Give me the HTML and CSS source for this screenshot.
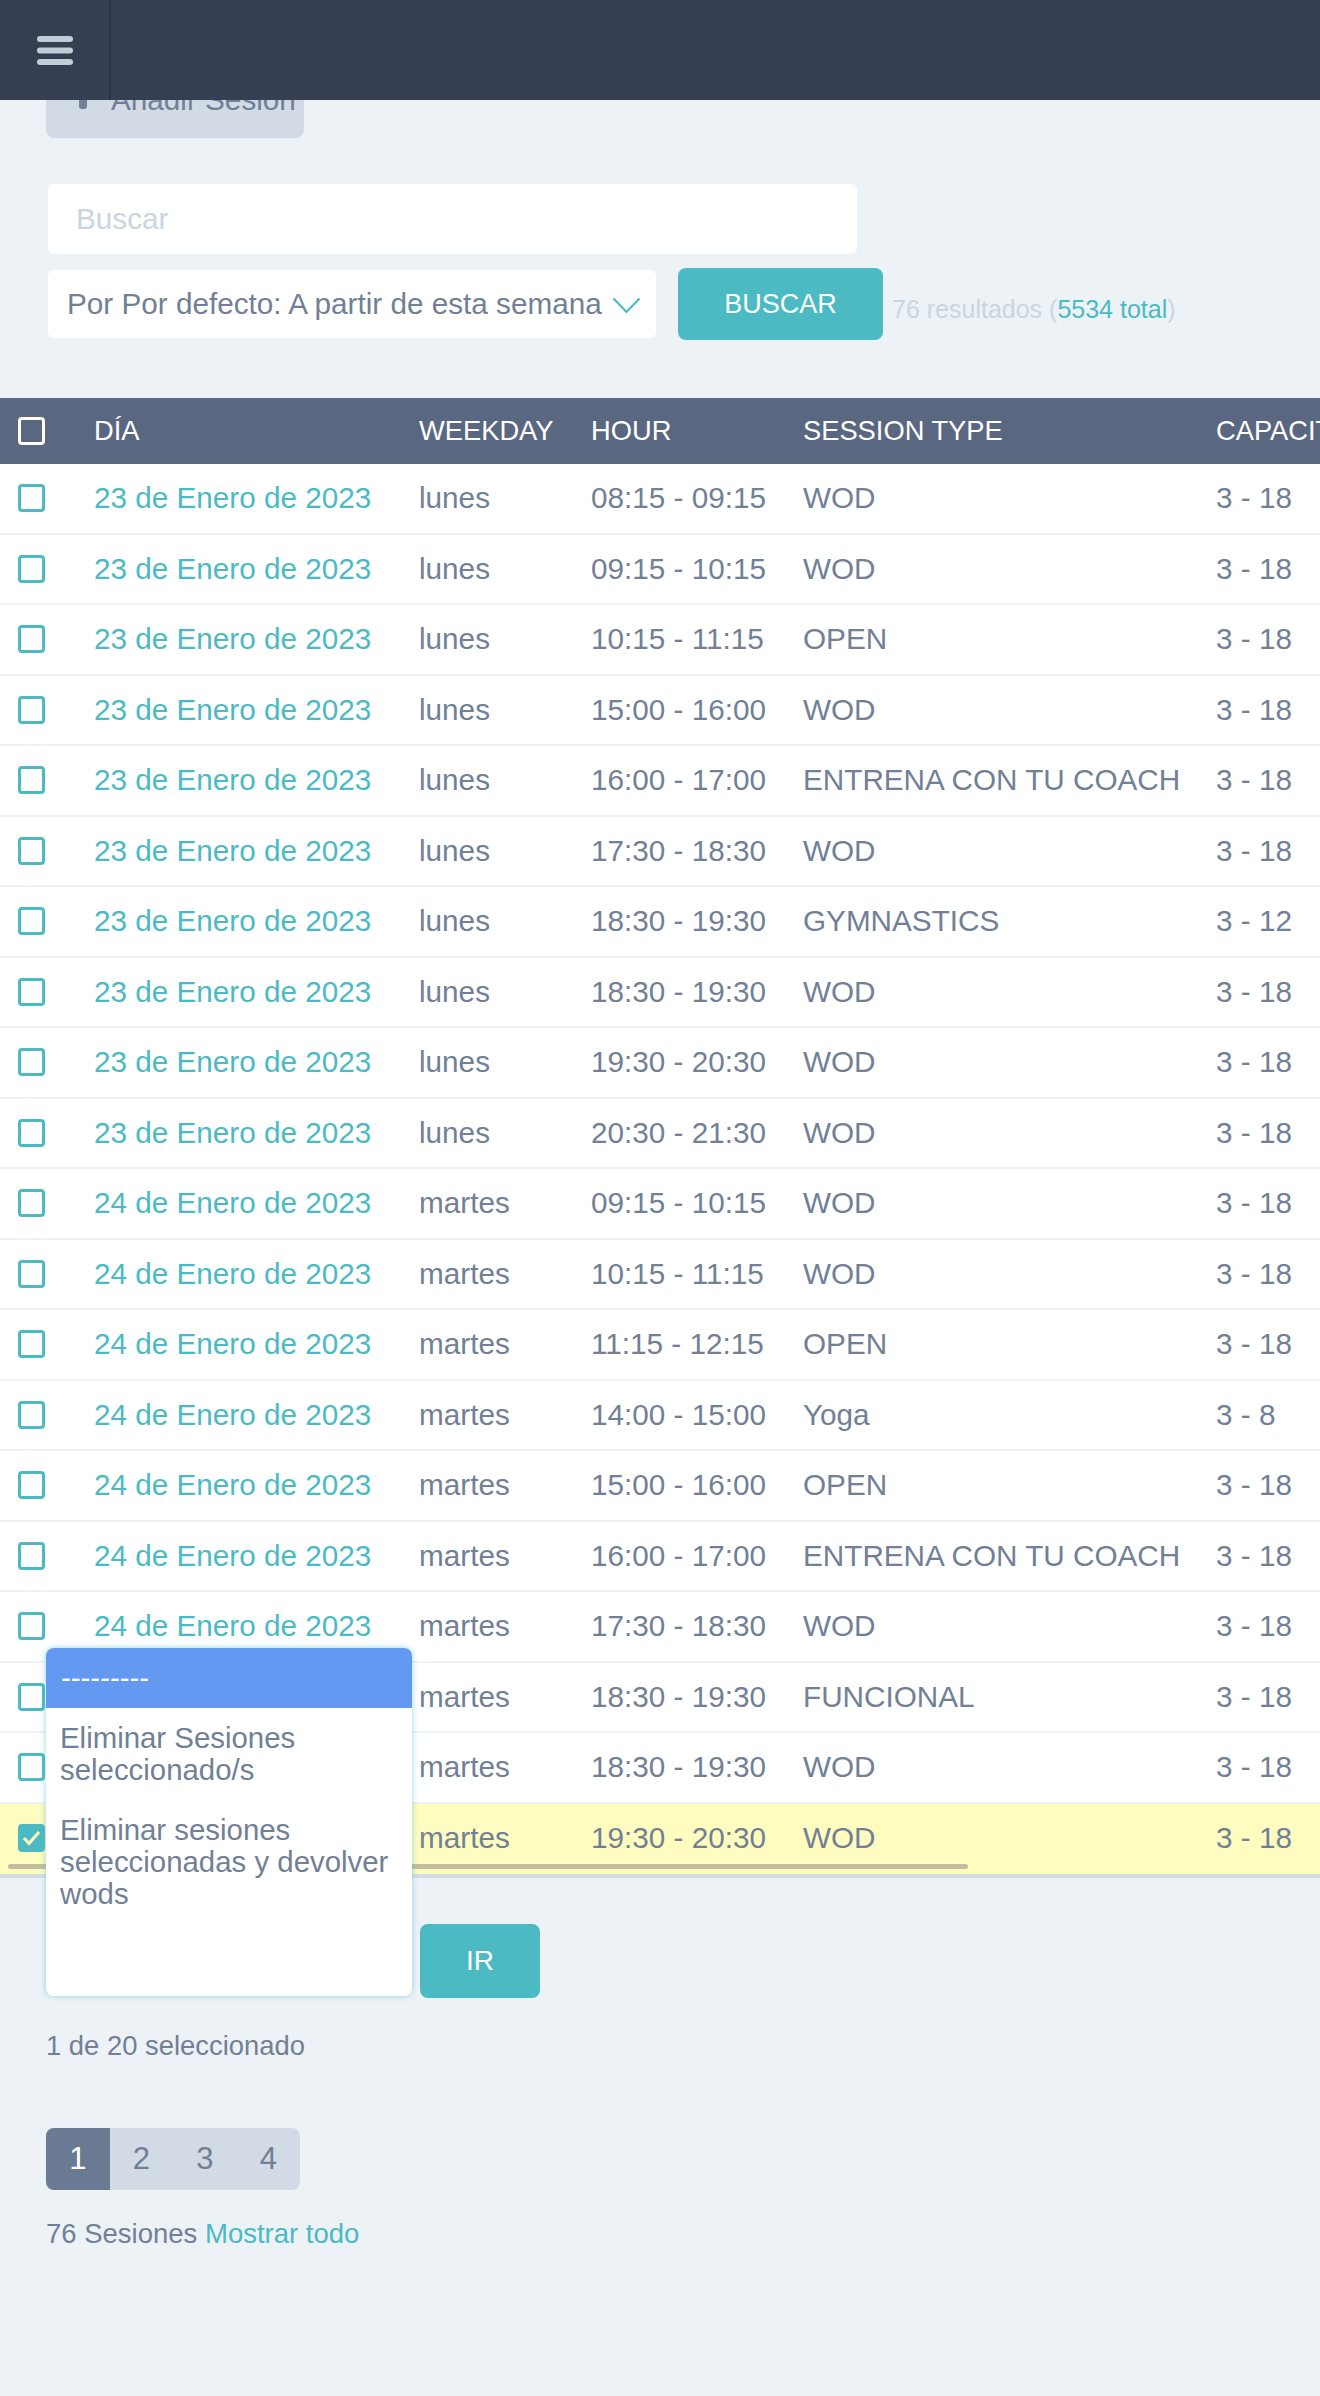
FILE: index.html
```html
<!DOCTYPE html>
<html lang="es">
<head>
<meta charset="utf-8">
<title>Sesiones</title>
<link rel="stylesheet" href="styles.css">
</head>
<body>
<header class="topbar">
  <div class="menu-btn">
    <svg width="36" height="30" viewBox="0 0 36 30"><rect x="0" y="0" width="36" height="6" rx="3" fill="#c4ccd8"/><rect x="0" y="11.5" width="36" height="6" rx="3" fill="#c4ccd8"/><rect x="0" y="23" width="36" height="6" rx="3" fill="#c4ccd8"/></svg>
  </div>
</header>

<main class="page">
  <div class="toolbar">
    <button class="btn-add" type="button">
      <svg class="plus" width="28" height="28" viewBox="0 0 28 28"><rect x="10" y="0" width="8" height="28" rx="3" fill="#718096"/><rect x="0" y="10" width="28" height="8" rx="3" fill="#718096"/></svg>
      <span>Añadir Sesión</span>
    </button>
  </div>

  <div class="filters">
    <input class="search" type="text" placeholder="Buscar">
    <div class="filter-row">
      <div class="select">
        <span>Por Por defecto: A partir de esta semana</span>
        <svg class="chev" width="29" height="17" viewBox="0 0 29 17"><polyline points="1.5,1.5 14.5,15 27.5,1.5" fill="none" stroke="#4bbac3" stroke-width="2.2"/></svg>
      </div>
      <button class="btn-search" type="button">BUSCAR</button>
      <span class="results">76 resultados (<a class="link">5534 total</a>)</span>
    </div>
  </div>

  <div class="table-wrap">
    <table class="sessions">
      <colgroup>
        <col class="c0"><col class="c1"><col class="c2"><col class="c3"><col class="c4"><col class="c5">
      </colgroup>
      <thead>
        <tr><th><span class="cb cb-head"></span></th><th>DÍA</th><th>WEEKDAY</th><th>HOUR</th><th>SESSION TYPE</th><th>CAPACITY</th></tr>
      </thead>
      <tbody>
        <tr><td><span class="cb"></span></td><td><a class="link">23 de Enero de 2023</a></td><td>lunes</td><td>08:15 - 09:15</td><td>WOD</td><td>3 - 18</td></tr>
        <tr><td><span class="cb"></span></td><td><a class="link">23 de Enero de 2023</a></td><td>lunes</td><td>09:15 - 10:15</td><td>WOD</td><td>3 - 18</td></tr>
        <tr><td><span class="cb"></span></td><td><a class="link">23 de Enero de 2023</a></td><td>lunes</td><td>10:15 - 11:15</td><td>OPEN</td><td>3 - 18</td></tr>
        <tr><td><span class="cb"></span></td><td><a class="link">23 de Enero de 2023</a></td><td>lunes</td><td>15:00 - 16:00</td><td>WOD</td><td>3 - 18</td></tr>
        <tr><td><span class="cb"></span></td><td><a class="link">23 de Enero de 2023</a></td><td>lunes</td><td>16:00 - 17:00</td><td>ENTRENA CON TU COACH</td><td>3 - 18</td></tr>
        <tr><td><span class="cb"></span></td><td><a class="link">23 de Enero de 2023</a></td><td>lunes</td><td>17:30 - 18:30</td><td>WOD</td><td>3 - 18</td></tr>
        <tr><td><span class="cb"></span></td><td><a class="link">23 de Enero de 2023</a></td><td>lunes</td><td>18:30 - 19:30</td><td>GYMNASTICS</td><td>3 - 12</td></tr>
        <tr><td><span class="cb"></span></td><td><a class="link">23 de Enero de 2023</a></td><td>lunes</td><td>18:30 - 19:30</td><td>WOD</td><td>3 - 18</td></tr>
        <tr><td><span class="cb"></span></td><td><a class="link">23 de Enero de 2023</a></td><td>lunes</td><td>19:30 - 20:30</td><td>WOD</td><td>3 - 18</td></tr>
        <tr><td><span class="cb"></span></td><td><a class="link">23 de Enero de 2023</a></td><td>lunes</td><td>20:30 - 21:30</td><td>WOD</td><td>3 - 18</td></tr>
        <tr><td><span class="cb"></span></td><td><a class="link">24 de Enero de 2023</a></td><td>martes</td><td>09:15 - 10:15</td><td>WOD</td><td>3 - 18</td></tr>
        <tr><td><span class="cb"></span></td><td><a class="link">24 de Enero de 2023</a></td><td>martes</td><td>10:15 - 11:15</td><td>WOD</td><td>3 - 18</td></tr>
        <tr><td><span class="cb"></span></td><td><a class="link">24 de Enero de 2023</a></td><td>martes</td><td>11:15 - 12:15</td><td>OPEN</td><td>3 - 18</td></tr>
        <tr><td><span class="cb"></span></td><td><a class="link">24 de Enero de 2023</a></td><td>martes</td><td>14:00 - 15:00</td><td>Yoga</td><td>3 - 8</td></tr>
        <tr><td><span class="cb"></span></td><td><a class="link">24 de Enero de 2023</a></td><td>martes</td><td>15:00 - 16:00</td><td>OPEN</td><td>3 - 18</td></tr>
        <tr><td><span class="cb"></span></td><td><a class="link">24 de Enero de 2023</a></td><td>martes</td><td>16:00 - 17:00</td><td>ENTRENA CON TU COACH</td><td>3 - 18</td></tr>
        <tr><td><span class="cb"></span></td><td><a class="link">24 de Enero de 2023</a></td><td>martes</td><td>17:30 - 18:30</td><td>WOD</td><td>3 - 18</td></tr>
        <tr><td><span class="cb"></span></td><td><a class="link">24 de Enero de 2023</a></td><td>martes</td><td>18:30 - 19:30</td><td>FUNCIONAL</td><td>3 - 18</td></tr>
        <tr><td><span class="cb"></span></td><td><a class="link">24 de Enero de 2023</a></td><td>martes</td><td>18:30 - 19:30</td><td>WOD</td><td>3 - 18</td></tr>
        <tr class="selected"><td><span class="cb cb-checked"><svg width="21" height="22" viewBox="0 0 21 22"><polyline points="3,11 8,16.5 18,5" fill="none" stroke="#fefcbf" stroke-width="3"/></svg></span></td><td><a class="link">24 de Enero de 2023</a></td><td>martes</td><td>19:30 - 20:30</td><td>WOD</td><td>3 - 18</td></tr>
      </tbody>
    </table>
    <div class="scroll-thumb"></div>
  </div>

  <div class="actions">
    <div class="action-select"></div>
    <button class="btn-ir" type="button">IR</button>
    <div class="dropdown">
      <div class="dd-head">---------</div>
      <div class="dd-opt">Eliminar Sesiones seleccionado/s</div>
      <div class="dd-opt">Eliminar sesiones seleccionadas y devolver wods</div>
    </div>
  </div>

  <p class="selected-count">1 de 20 seleccionado</p>

  <nav class="pager">
    <span class="pg active">1</span>
    <span class="pg">2</span>
    <span class="pg">3</span>
    <span class="pg">4</span>
  </nav>

  <p class="total">76 Sesiones <a class="link">Mostrar todo</a></p>
</main>
</body>
</html>
```

FILE: styles.css
```css
html {
  background: #edf2f7;
}

body {
  margin: 0;
  background: #edf2f7;
  font-family: "Liberation Sans", Arial, sans-serif;
  font-size: 29.7px;
  color: #718096;
}

.link {
  color: #4bbac3;
  text-decoration: none;
}

/* top bar */
.topbar {
  position: fixed;
  top: 0;
  left: 0;
  right: 0;
  height: 100px;
  background: #363f51;
  display: flex;
  z-index: 10;
}

.menu-btn {
  width: 111px;
  border-right: 2px solid #2b3343;
  display: flex;
  align-items: center;
  justify-content: center;
  padding-top: 2px;
  box-sizing: border-box;
}

.page {
  padding-top: 62px;
}

/* add button */
.toolbar {
  padding-left: 46px;
}

.btn-add {
  display: inline-flex;
  align-items: center;
  gap: 14px;
  width: 258px;
  height: 76px;
  padding: 0 0 0 23px;
  background: #d2dbe5;
  border: 0;
  border-radius: 8px;
  font-family: inherit;
  font-size: 29.7px;
  color: #718096;
}

.plus {
  flex: none;
  margin-top: -10px;
}

/* filters */
.filters {
  padding: 46px 0 0 48px;
}

.search {
  display: block;
  width: 809px;
  height: 70px;
  box-sizing: border-box;
  border: 0;
  border-radius: 6px;
  background: #fff;
  padding: 0 28px;
  font-family: inherit;
  font-size: 29.7px;
  color: #718096;
  outline: none;
}

.search::placeholder {
  color: #cbd5e0;
}

.filter-row {
  display: flex;
  align-items: center;
  margin-top: 14px;
}

.select {
  display: flex;
  align-items: center;
  gap: 10px;
  width: 608px;
  height: 68px;
  box-sizing: border-box;
  padding-left: 19px;
  background: #fff;
  border-radius: 6px;
  white-space: nowrap;
}

.chev {
  flex: none;
  margin-top: 2px;
}

.btn-search {
  margin-left: 22px;
  width: 205px;
  height: 72px;
  background: #4bbac3;
  color: #fff;
  border: 0;
  border-radius: 8px;
  font-family: inherit;
  font-size: 27px;
}

.results {
  margin-left: 9px;
  padding-top: 11px;
  font-size: 25px;
  color: #cbd5e0;
}

/* table */
.table-wrap {
  position: relative;
  margin-top: 58px;
  overflow: hidden;
  border-bottom: 4px solid #d4dce6;
}

.sessions {
  border-collapse: separate;
  border-spacing: 0;
  table-layout: fixed;
  width: 1793px;
}

.c0 { width: 76px; }
.c1 { width: 325px; }
.c2 { width: 172px; }
.c3 { width: 212px; }
.c4 { width: 413px; }
.c5 { width: 595px; }

.sessions th {
  height: 66px;
  padding: 0 0 0 18px;
  background: #5a6780;
  color: #fff;
  font-size: 27.3px;
  font-weight: normal;
  text-align: left;
  white-space: nowrap;
}

.sessions td {
  box-sizing: border-box;
  height: 70.5px;
  padding: 0 0 0 18px;
  background: #fff;
  border-bottom: 2px solid #eff1f4;
  white-space: nowrap;
}

.sessions tr.selected td {
  background: #fefcbf;
  border-bottom-color: #fefcbf;
}

.cb {
  display: block;
  width: 27px;
  height: 28px;
  box-sizing: border-box;
  border: 3px solid #4bbac3;
  border-radius: 4px;
  background: #fff;
}

.cb-head {
  border-color: #fff;
  background: transparent;
}

.cb-checked {
  background: #4bbac3;
}

.cb-checked svg {
  display: block;
}

.scroll-thumb {
  position: absolute;
  left: 8px;
  bottom: 5px;
  width: 960px;
  height: 5px;
  border-radius: 3px;
  background: #c2bc9e;
}

/* actions */
.actions {
  position: relative;
  display: flex;
  align-items: center;
  gap: 8px;
  margin-top: 46px;
  padding-left: 46px;
}

.action-select {
  width: 366px;
  height: 70px;
  background: #fff;
  border-radius: 6px;
}

.btn-ir {
  width: 120px;
  height: 74px;
  background: #4bbac3;
  color: #fff;
  border: 0;
  border-radius: 8px;
  font-family: inherit;
  font-size: 28px;
}

.dropdown {
  position: absolute;
  left: 46px;
  top: -276px;
  width: 366px;
  height: 348px;
  background: #fff;
  border-radius: 8px;
  box-shadow: 0 0 5px 1px rgba(75, 186, 195, 0.45);
  overflow: hidden;
  font-size: 29.4px;
  line-height: 32px;
  z-index: 5;
}

.dd-head {
  height: 60px;
  display: flex;
  align-items: center;
  padding-left: 15px;
  background: #6399f1;
  color: #fff;
}

.dd-opt {
  padding: 14px;
}

/* footer bits */
.selected-count {
  margin: 32px 0 0;
  padding-left: 46px;
  font-size: 27.4px;
}

.pager {
  display: inline-flex;
  margin: 66px 0 0 46px;
  border-radius: 8px;
  overflow: hidden;
  background: #d2dbe5;
}

.pg {
  width: 63.5px;
  height: 62px;
  display: flex;
  align-items: center;
  justify-content: center;
  font-size: 31px;
  color: #718096;
}

.pg.active {
  background: #6b7a93;
  color: #fff;
}

.total {
  margin: 28px 0 0;
  padding-left: 46px;
  font-size: 27.5px;
}
```
